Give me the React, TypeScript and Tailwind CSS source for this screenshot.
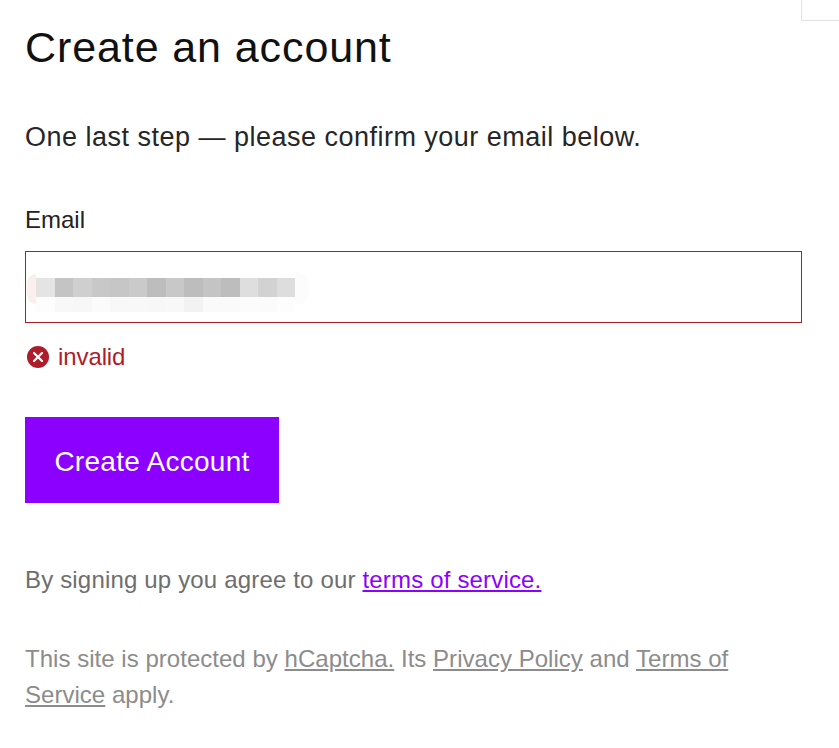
const blurBlocks = [
  { top: "bg-[#e4e4e4]", low: "bg-[#fdfdfd]" },
  { top: "bg-[#c4c4c4]", low: "bg-[#f8f8f8]" },
  { top: "bg-[#cfcfcf]", low: "bg-[#f7f7f7]" },
  { top: "bg-[#c8c8c8]", low: "bg-[#fbfbfb]" },
  { top: "bg-[#c6c6c6]", low: "bg-[#f8f8f8]" },
  { top: "bg-[#cacaca]", low: "bg-[#f8f8f8]" },
  { top: "bg-[#bdbdbd]", low: "bg-[#f7f7f7]" },
  { top: "bg-[#c8c8c8]", low: "bg-[#f8f8f8]" },
  { top: "bg-[#bdbdbd]", low: "bg-[#f2f2f2]" },
  { top: "bg-[#c4c4c4]", low: "bg-[#fafafa]" },
  { top: "bg-[#bdbdbd]", low: "bg-[#fafafa]" },
  { top: "bg-[#dedede]", low: "bg-[#fcfcfc]" },
  { top: "bg-[#d2d2d2]", low: "bg-[#fbfbfb]" },
  { top: "bg-[#dddddd]", low: "bg-[#fdfdfd]" },
];

export default function App() {
  return (
    <div className="relative h-[748px] w-[839px] overflow-hidden bg-white font-['Liberation_Sans',sans-serif]">
      <div className="absolute right-0 top-0 h-[21px] w-[38px] border-b border-l border-[#e2e2e2]" />

      <div className="w-[777px] ml-[25px] pt-[21px]">
        <h1 className="text-[43px] leading-[52px] font-normal text-[#111] tracking-[0.9px]">Create an account</h1>
        <p className="mt-[46px] text-[27px] leading-[36px] text-[#262626] tracking-[0.49px]">
          One last step — please confirm your email below.
        </p>

        <label className="block mt-[49px] text-[24px] leading-[32px] text-[#222]">Email</label>
        <div className="mt-[15px] h-[72px] border border-[#ae1c2a] flex items-start pt-[26px]">
          <div className="ml-[1px] flex">
            <div className="w-[9px] h-[30px] -mt-[4px] rounded-l-full bg-[#fbeeee]" />
            {blurBlocks.map((b, i) => (
              <div key={i} className="w-[18.5px]">
                <div className={`h-[19px] ${b.top}`} />
                <div className={`h-[15px] ${b.low}`} />
              </div>
            ))}
            <div className="w-[14px] h-[33px] -mt-[6px] rounded-r-full bg-[#fcfcfc]" />
          </div>
        </div>

        <div className="mt-[18px] flex items-center gap-[8px] h-[32px] text-[#ae1c2a]">
          <svg width="24" height="24" viewBox="0 0 24 24" className="ml-[1px]">
            <circle cx="12" cy="12" r="11" fill="#ae1c2a" />
            <path d="M8 8l8 8M16 8l-8 8" stroke="#fff" strokeWidth="2.2" strokeLinecap="round" />
          </svg>
          <span className="text-[24px] leading-[32px] tracking-[-0.1px]">invalid</span>
        </div>

        <button className="mt-[44px] block h-[86px] w-[254px] pt-[3px] bg-[#8c00ff] text-white text-[28px] tracking-[0.27px]">
          Create Account
        </button>

        <p className="mt-[59px] text-[24px] leading-[36px] text-[#6e6e6e] tracking-[0.17px]">
          By signing up you agree to our{" "}
          <a className="text-[#8c00ff] underline">terms of service.</a>
        </p>

        <p className="mt-[43px] text-[24px] leading-[36px] text-[#8c8c8c] tracking-[0.03px]">
          This site is protected by <a className="underline">hCaptcha.</a> Its{" "}
          <a className="underline">Privacy Policy</a> and{" "}
          <a className="underline">Terms of Service</a> apply.
        </p>
      </div>
    </div>
  );
}
